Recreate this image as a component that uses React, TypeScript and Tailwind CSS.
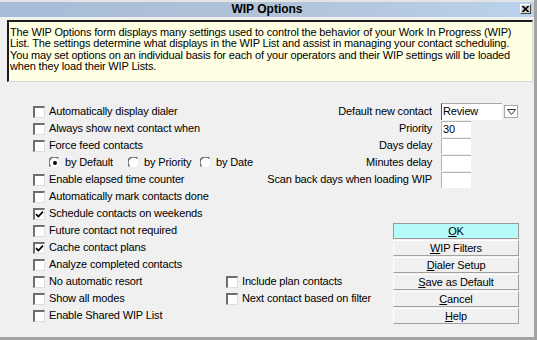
import React from 'react';

const leftOptions = [
  { label: 'Automatically display dialer' },
  { label: 'Always show next contact when' },
  { label: 'Force feed contacts' },
  { label: 'radios' },
  { label: 'Enable elapsed time counter' },
  { label: 'Automatically mark contacts done' },
  { label: 'Schedule contacts on weekends', checked: true },
  { label: 'Future contact not required' },
  { label: 'Cache contact plans', checked: true },
  { label: 'Analyze completed contacts' },
  { label: 'No automatic resort' },
  { label: 'Show all modes' },
  { label: 'Enable Shared WIP List' },
];

const fields = [
  { label: 'Priority', value: '30' },
  { label: 'Days delay', value: '' },
  { label: 'Minutes delay', value: '' },
  { label: 'Scan back days when loading WIP', value: '' },
];

const buttons = [
  { key: 'O', rest: 'K', primary: true },
  { key: 'W', rest: 'IP Filters' },
  { key: 'D', rest: 'ialer Setup' },
  { key: 'S', rest: 'ave as Default' },
  { key: 'C', rest: 'ancel' },
  { key: 'H', rest: 'elp' },
];

const CheckBox = ({ checked }: { checked?: boolean }) => (
  <div className="w-[12px] h-[12px] shrink-0 bg-white border-t-2 border-l-2 border-t-[#6e6e6e] border-l-[#6e6e6e] border-r border-b border-r-[#dedede] border-b-[#dedede] flex items-center justify-center">
    {checked && (
      <svg width="9" height="9" viewBox="0 0 9 9">
        <path d="M1 4.2 L3.4 6.6 L8 1.6" fill="none" stroke="#000" strokeWidth="1.7" />
      </svg>
    )}
  </div>
);

const Radio = ({ selected }: { selected?: boolean }) => (
  <svg width="12" height="12" viewBox="0 0 12 12" className="shrink-0">
    <circle cx="6" cy="6" r="5.5" fill="#fff" />
    <path d="M1.5 9.5 A5 5 0 0 1 9.5 1.5" fill="none" stroke="#6e6e6e" strokeWidth="1.6" />
    <path d="M9.5 1.5 A5 5 0 0 1 1.5 9.5" fill="none" stroke="#e2e2e2" strokeWidth="1" />
    {selected && <circle cx="6" cy="6" r="2" fill="#000" />}
  </svg>
);

const OptionRow = ({ label, checked }: { label: string; checked?: boolean }) => (
  <div className="h-[17px] flex items-center gap-[4px] whitespace-nowrap">
    <CheckBox checked={checked} />
    <span>{label}</span>
  </div>
);

export default function App() {
  return (
    <div className="w-[537px] h-[340px] bg-[#f0f0f0] text-black text-[11px] leading-[17px] tracking-[-0.15px] font-['Liberation_Sans',Arial,sans-serif] flex flex-col overflow-hidden border-r-[3px] border-b-[3px] border-[#a3a3a3]">
      <div className="h-[2px] bg-[#e4e4e4] shrink-0" />

      {/* title bar */}
      <div className="relative h-[15px] shrink-0 bg-gradient-to-r from-[#a6bcd8] via-[#b0c3d7] to-[#bad2ec] flex items-center justify-center">
        <span className="font-bold text-[12px] leading-[15px] tracking-normal">WIP Options</span>
        <div className="absolute right-[3px] top-[2px] w-[11px] h-[10px] bg-[#d6d3cc] border-t border-l border-white border-r border-b border-r-[#404040] border-b-[#404040] flex items-center justify-center">
          <svg width="7" height="6" viewBox="0 0 7 6">
            <path d="M0.5 0 L6.5 6 M6.5 0 L0.5 6" stroke="#000" strokeWidth="1.6" />
          </svg>
        </div>
      </div>

      {/* description */}
      <div className="mt-[3px] ml-[7px] mr-[1px] h-[62px] shrink-0 bg-[#ffffe3] border-t-2 border-l-2 border-[#1c1c1c] border-r border-b border-r-[#d8d8d8] border-b-[#d8d8d8] pl-[1px] pt-[5px] leading-[11.4px] whitespace-nowrap">
        The WIP Options form displays many settings used to control the behavior of your Work In Progress (WIP)
        <br />
        List. The settings determine what displays in the WIP List and assist in managing your contact scheduling.
        <br />
        You may set options on an individual basis for each of your operators and their WIP settings will be loaded
        <br />
        when they load their WIP Lists.
      </div>

      {/* main area */}
      <div className="mt-[21px] flex">
        <div className="ml-[33px] w-[193px] shrink-0 flex flex-col">
          {leftOptions.map((o) =>
            o.label === 'radios' ? (
              <div key="radios" className="h-[17px] ml-[16px] flex items-center whitespace-nowrap">
                <div className="w-[79px] shrink-0 flex items-center gap-[4px]">
                  <Radio selected />
                  <span>by Default</span>
                </div>
                <div className="w-[72px] shrink-0 flex items-center gap-[4px]">
                  <Radio />
                  <span>by Priority</span>
                </div>
                <div className="shrink-0 flex items-center gap-[4px]">
                  <Radio />
                  <span>by Date</span>
                </div>
              </div>
            ) : (
              <OptionRow key={o.label} label={o.label} checked={o.checked} />
            )
          )}
        </div>

        <div className="flex-1 flex flex-col">
          <div className="h-[17px] flex items-center">
            <div className="w-[206px] text-right whitespace-nowrap">Default new contact</div>
            <div className="ml-[9px] w-[61px] h-[17px] bg-white border-t border-t-[#a8a8a8] border-l border-l-[#505050] pl-[1px] leading-[15px]">
              Review
            </div>
            <div className="ml-[2px] w-[14px] h-[13px] bg-white border border-[#a8a8a8] flex items-center justify-center">
              <svg width="9" height="6" viewBox="0 0 9 6">
                <path d="M0.5 0.5 H8.5 L4.5 5.5 Z" fill="none" stroke="#333" strokeWidth="1" />
              </svg>
            </div>
          </div>
          {fields.map((f) => (
            <div key={f.label} className="h-[17px] flex items-center">
              <div className="w-[206px] text-right whitespace-nowrap">{f.label}</div>
              <div className="ml-[9px] w-[30px] h-[16px] bg-white border-t border-l border-[#b4b4b4] pl-[1px] leading-[15px]">
                {f.value}
              </div>
            </div>
          ))}

          <div className="mt-[34px] flex">
            <div className="w-[167px] pt-[51px] flex flex-col">
              <OptionRow label="Include plan contacts" />
              <OptionRow label="Next contact based on filter" />
            </div>
            <div className="w-[126px] flex flex-col">
              {buttons.map((b) => (
                <div key={b.key} className="h-[17px] pt-[1px]">
                  <div
                    className={
                      b.primary
                        ? 'h-[16px] bg-[#b6fafa] border border-[#9a9a9a] flex items-center justify-center leading-[14px]'
                        : 'h-[16px] bg-[#f0f0f0] border-t border-l border-white border-r border-b border-r-[#a0a0a0] border-b-[#a0a0a0] flex items-center justify-center leading-[14px]'
                    }
                  >
                    <span>
                      <span className="underline underline-offset-[1px]">{b.key}</span>
                      {b.rest}
                    </span>
                  </div>
                </div>
              ))}
            </div>
          </div>
        </div>
      </div>
    </div>
  );
}
